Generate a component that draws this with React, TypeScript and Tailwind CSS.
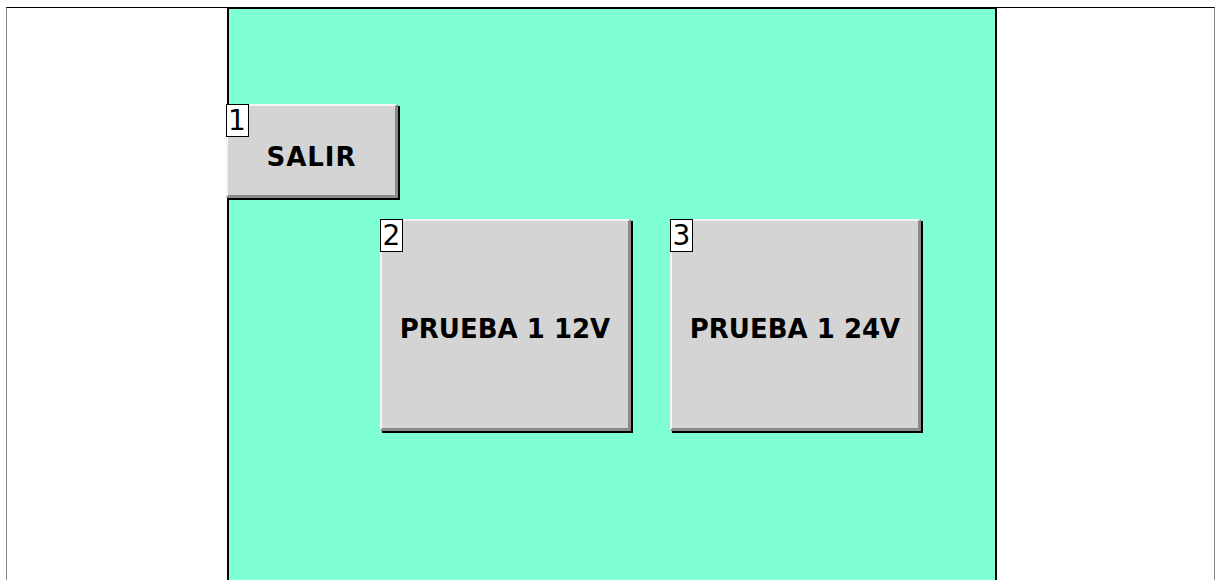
import type { ReactNode } from 'react'

const FONT = "font-['DejaVu_Sans',Verdana,sans-serif]"

function PanelButton({ num, className, children }: { num: number; className: string; children: ReactNode }) {
  return (
    <div
      className={`relative flex items-center justify-center bg-[#d4d4d4] border-t-2 border-l-2 border-t-[#f4f4f4] border-l-[#f4f4f4] border-r-[3px] border-b-[3px] border-r-[#8a8a8a] border-b-[#8a8a8a] shadow-[2px_2px_0_#000] ${className}`}
    >
      {/* Number badge */}
      <span className="absolute -left-[2px] -top-[2px] w-[23px] h-[33px] flex items-center justify-center bg-white border border-black text-[28px] leading-none text-black">
        {num}
      </span>
      <span className="font-bold text-black leading-none">{children}</span>
    </div>
  )
}

export default function App() {
  return (
    <div className={`h-[580px] overflow-hidden bg-white ${FONT}`}>
      <div className="ml-[6px] mt-[7px] h-[600px] border-t border-t-black border-l border-r border-l-[#888] border-r-[#888] flex">
        <div className="ml-[220px] w-[770px] h-full bg-[#7fffd4] border-t border-l-2 border-r-2 border-black flex flex-col">
          <div className="pt-[95px] -ml-[3px]">
            <PanelButton num={1} className="w-[172px] h-[94px] text-[26px] tracking-[1px] pt-[12px]">
              SALIR
            </PanelButton>
          </div>

          <div className="mt-[21px] ml-[151px] flex gap-[39px]">
            <PanelButton num={2} className="w-[251px] h-[212px] text-[26px] pt-[8px]">
              PRUEBA 1 12V
            </PanelButton>
            <PanelButton num={3} className="w-[251px] h-[212px] text-[26px] pt-[8px]">
              PRUEBA 1 24V
            </PanelButton>
          </div>
        </div>
      </div>
    </div>
  )
}
